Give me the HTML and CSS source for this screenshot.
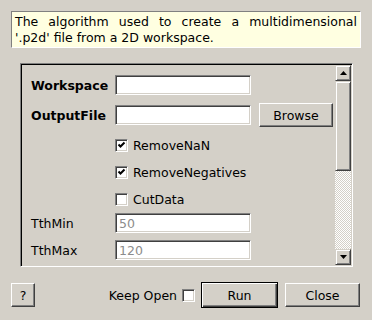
FILE: index.html
```html
<!DOCTYPE html>
<html lang="en">
<head>
    <meta charset="UTF-8">
    <meta name="viewport" content="width=device-width, initial-scale=1.0">
    <title>CreateMD p2d</title>
    <link rel="stylesheet" href="styles.css">
</head>
<body>
<div class="dialog">
    <div class="summary">The algorithm used to create a multidimensional '.p2d' file from a 2D workspace.</div>

    <div class="props">
        <div class="props-content">
            <div class="row row-ws">
                <label class="prop-name bold">Workspace</label>
                <input class="text-box" type="text">
            </div>
            <div class="row row-out">
                <label class="prop-name bold">OutputFile</label>
                <input class="text-box" type="text">
                <button class="btn btn-browse">Browse</button>
            </div>
            <div class="row row-check first-check">
                <span class="check"><svg width="9" height="9" viewBox="0 0 9 9"><path d="M1.5 3.5 L3.5 5.5 L7.5 1.5" fill="none" stroke="#000" stroke-width="2"/></svg></span>
                <span class="check-label">RemoveNaN</span>
            </div>
            <div class="row row-check">
                <span class="check"><svg width="9" height="9" viewBox="0 0 9 9"><path d="M1.5 3.5 L3.5 5.5 L7.5 1.5" fill="none" stroke="#000" stroke-width="2"/></svg></span>
                <span class="check-label">RemoveNegatives</span>
            </div>
            <div class="row row-check">
                <span class="check"></span>
                <span class="check-label">CutData</span>
            </div>
            <div class="row row-num">
                <label class="prop-name">TthMin</label>
                <input class="text-box dim" type="text" value="50">
            </div>
            <div class="row row-num second-num">
                <label class="prop-name">TthMax</label>
                <input class="text-box dim" type="text" value="120">
            </div>
        </div>

        <div class="vscroll">
            <div class="sb-btn"><svg width="7" height="4" viewBox="0 0 7 4"><polygon points="0,4 7,4 3.5,0" fill="#000"/></svg></div>
            <div class="sb-thumb"></div>
            <div class="sb-track"></div>
            <div class="sb-btn"><svg width="7" height="4" viewBox="0 0 7 4"><polygon points="0,0 7,0 3.5,4" fill="#000"/></svg></div>
        </div>
    </div>

    <div class="buttons">
        <button class="btn btn-help">?</button>
        <div class="keep-open">
            <span>Keep Open</span>
            <span class="check"></span>
        </div>
        <button class="btn btn-default">Run</button>
        <button class="btn btn-close">Close</button>
    </div>
</div>
</body>
</html>
```

FILE: styles.css
```css
body {
    margin: 0;
    background-color: #d4d0c8;
    font-family: "DejaVu Sans", sans-serif;
    font-size: 12.5px;
    color: #000;
}

.dialog {
    width: 372px;
    height: 320px;
    display: flex;
    flex-direction: column;
}

.summary {
    margin: 11px 11px 0 11px;
    padding: 2px 3px 1px 3px;
    line-height: 16px;
    background-color: #ffffe1;
    border: 1px solid;
    border-color: #808080 #ffffff #ffffff #808080;
    text-align: justify;
}

/* property area with its own scrollbar */
.props {
    margin: 15px 19px 0 20px;
    height: 204px;
    box-sizing: border-box;
    border: 1px solid;
    border-color: #808080 #ffffff #ffffff #808080;
    box-shadow: inset 1px 1px #000, inset -1px -1px #d4d0c8;
    padding: 1px;
    display: flex;
}

.props-content {
    flex: 1;
    overflow: hidden;
    padding-left: 9px;
    display: flex;
    flex-direction: column;
}

.row {
    display: flex;
    align-items: center;
    flex-shrink: 0;
}

.row-ws {
    margin-top: 8px;
    height: 24px;
}

.row-out {
    margin-top: 6px;
    height: 24px;
}

.row-check {
    height: 26px;
    margin-top: 1px;
    padding-left: 84px;
}

.first-check {
    margin-top: 5px;
}

.row-num {
    height: 22px;
}

.second-num {
    margin-top: 5px;
}

.prop-name {
    width: 84px;
    flex-shrink: 0;
}

.bold {
    font-weight: bold;
}

.text-box {
    width: 136px;
    height: 20px;
    box-sizing: border-box;
    margin: 0;
    padding: 0 3px;
    font-family: inherit;
    font-size: 12.5px;
    background-color: #fff;
    border: 1px solid;
    border-color: #808080 #ffffff #ffffff #808080;
    box-shadow: inset 1px 1px #404040, inset -1px -1px #d4d0c8;
    outline: none;
    flex-shrink: 0;
}

.dim {
    color: #8c8c8c;
}

.check {
    width: 13px;
    height: 13px;
    box-sizing: border-box;
    background-color: #fff;
    border: 1px solid;
    border-color: #808080 #ffffff #ffffff #808080;
    box-shadow: inset 1px 1px #404040, inset -1px -1px #d4d0c8;
    padding: 1px;
    display: flex;
    flex-shrink: 0;
}

.check svg {
    display: block;
}

.check-label {
    margin-left: 5px;
}

.btn {
    margin: 0;
    padding: 0;
    height: 24px;
    box-sizing: border-box;
    font-family: inherit;
    font-size: 12.5px;
    color: #000;
    background-color: #d4d0c8;
    border: 1px solid;
    border-color: #ffffff #404040 #404040 #ffffff;
    box-shadow: inset -1px -1px #808080;
    flex-shrink: 0;
}

.btn-browse {
    width: 74px;
    margin-left: 8px;
}

/* scrollbar */
.vscroll {
    width: 16px;
    display: flex;
    flex-direction: column;
}

.sb-btn,
.sb-thumb {
    box-sizing: border-box;
    background-color: #d4d0c8;
    border: 1px solid;
    border-color: #d4d0c8 #404040 #404040 #d4d0c8;
    box-shadow: inset 1px 1px #ffffff, inset -1px -1px #808080;
}

.sb-btn {
    height: 16px;
    display: flex;
    align-items: center;
    justify-content: center;
}

.sb-thumb {
    height: 90px;
}

.sb-track {
    flex: 1;
    background-image: conic-gradient(#ffffff 25%, #d4d0c8 0 50%, #ffffff 0 75%, #d4d0c8 0);
    background-size: 2px 2px;
}

/* bottom buttons */
.buttons {
    margin-top: 15px;
    height: 26px;
    padding: 0 12px 0 11px;
    display: flex;
    align-items: center;
}

.btn-help {
    width: 24px;
}

.keep-open {
    margin-left: auto;
    display: flex;
    align-items: center;
    gap: 5px;
    margin-right: 6px;
}

.btn-default {
    width: 77px;
    height: 26px;
    border: 1px solid #000;
    box-shadow: inset 1px 1px #ffffff, inset -1px -1px #404040, inset -2px -2px #808080;
}

.btn-close {
    width: 75px;
    margin-left: 7px;
}
```
